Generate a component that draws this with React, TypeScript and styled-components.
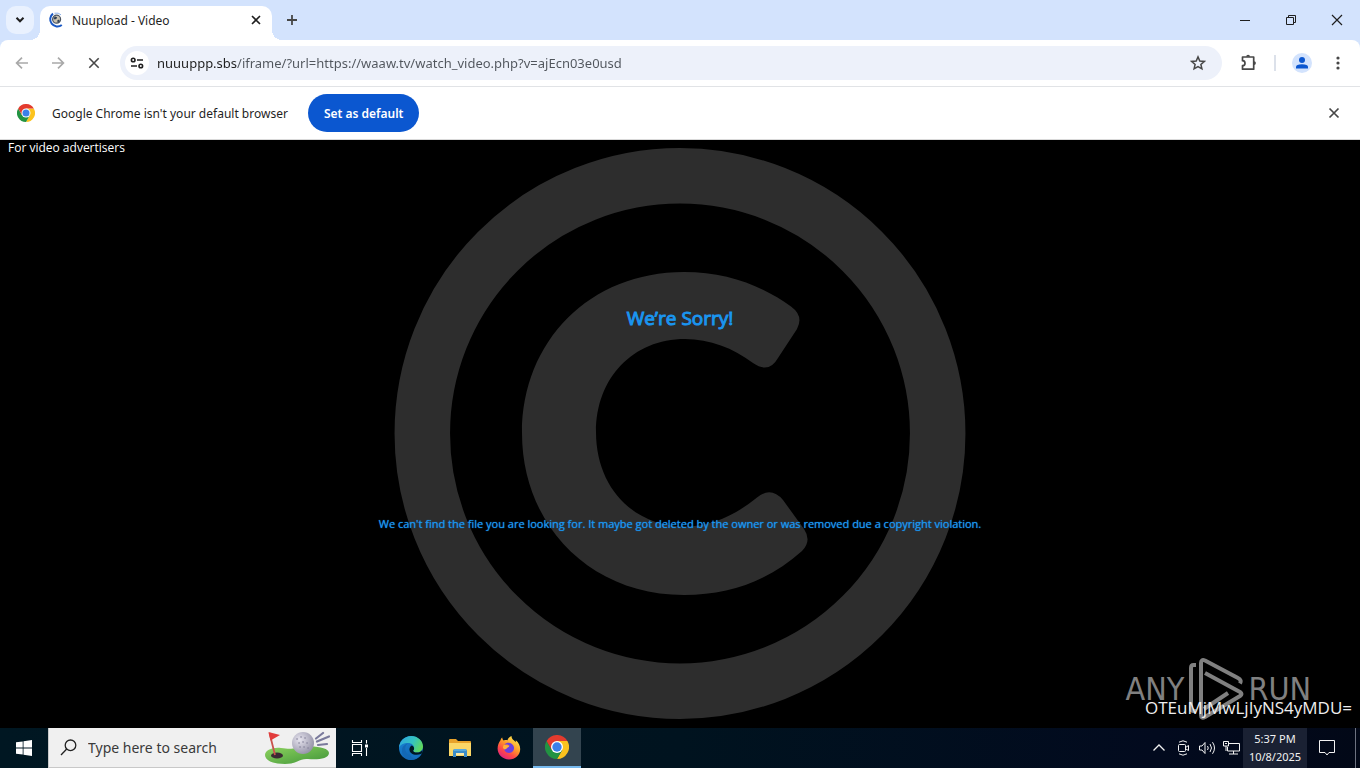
import React from "react";
import styled, { createGlobalStyle, css } from "styled-components";

const uiFont = '"Noto Sans", "Open Sans", sans-serif';

const GlobalStyle = createGlobalStyle`
  * { box-sizing: border-box; }
  body { margin: 0; background: #000; font-family: ${uiFont}; }
  button, input { font-family: inherit; }
  svg { display: block; }
`;

const Desktop = styled.div`
  display: flex;
  flex-direction: column;
  min-height: 100vh;
`;

const iconButton = css`
  display: flex;
  align-items: center;
  justify-content: center;
  flex: none;
  padding: 0;
  border: 0;
  background: transparent;
  color: inherit;
`;

/* ---------- tab strip ---------- */

const TabStrip = styled.header`
  display: flex;
  align-items: flex-end;
  height: 40px;
  padding-left: 6px;
  background: #d3e3fd;
  color: #1f1f1f;
`;

const TabSearch = styled.button`
  ${iconButton}
  width: 28px;
  height: 28px;
  margin-bottom: 6px;
  border-radius: 10px;
  background: #e9f1fe;
`;

const Tab = styled.div`
  position: relative;
  display: flex;
  align-items: center;
  gap: 8px;
  width: 232px;
  height: 34px;
  margin-left: 6px;
  padding: 0 8px 6px 8px;
  border-radius: 10px 10px 0 0;
  background: #fff;
  font-size: 12px;
  &::before, &::after {
    content: "";
    position: absolute;
    bottom: 0;
    width: 10px;
    height: 10px;
  }
  &::before { right: 100%; background: radial-gradient(circle at 0 0, transparent 10px, #fff 10px); }
  &::after { left: 100%; background: radial-gradient(circle at 100% 0, transparent 10px, #fff 10px); }
`;

const TabTitle = styled.span`
  flex: 1;
  white-space: nowrap;
`;

const TabClose = styled.button`
  ${iconButton}
  width: 16px;
  height: 16px;
`;

const NewTab = styled.button`
  ${iconButton}
  width: 28px;
  height: 28px;
  margin: 0 auto 6px 6px;
  color: #474747;
`;

const WindowButton = styled.button`
  ${iconButton}
  width: 46px;
  height: 40px;
`;

/* ---------- toolbar ---------- */

const ToolbarBack = styled.div`
  background: #d3e3fd;
`;

const Toolbar = styled.nav`
  display: flex;
  align-items: center;
  height: 47px;
  padding: 0 4px;
  border-bottom: 1px solid #e1e3e6;
  border-radius: 8px 8px 0 0;
  background: #fff;
  color: #474747;
`;

const ToolButton = styled.button<{ $dim?: boolean }>`
  ${iconButton}
  width: 36px;
  height: 36px;
  color: ${(p) => (p.$dim ? "#a9a9a9" : "#474747")};
`;

const AddressBar = styled.div`
  display: flex;
  flex: 1;
  align-items: center;
  height: 34px;
  margin: 0 9px 0 8px;
  padding: 0 6px 0 5px;
  border-radius: 17px;
  background: #edf1fa;
`;

const SiteInfo = styled.button`
  ${iconButton}
  width: 24px;
  height: 24px;
  border-radius: 12px;
  background: #fff;
  color: #1f1f1f;
`;

const AddressInput = styled.input`
  flex: 1;
  min-width: 0;
  height: 24px;
  margin-left: 8px;
  padding: 0;
  border: 0;
  outline: 0;
  background: linear-gradient(90deg, #1f1f1f 80px, #50555c 80px);
  background-clip: text;
  color: transparent;
  font-size: 13px;
`;

const Divider = styled.span`
  width: 2px;
  height: 16px;
  margin: 0 8px 0 7px;
  background: #dce1ea;
`;

const Avatar = styled.button`
  ${iconButton}
  width: 20px;
  height: 20px;
  margin: 0 8px;
  border-radius: 10px;
  background: #d3e3fd;
`;

/* ---------- info bar ---------- */

const InfoBar = styled.section`
  display: flex;
  align-items: center;
  height: 53px;
  padding: 0 16px 0 17px;
  border-bottom: 1px solid #d9d9d9;
  background: #fff;
  color: #1f1f1f;
  font-size: 12px;
`;

const InfoText = styled.span`
  margin: 0 20px 0 17px;
  white-space: nowrap;
`;

const PrimaryButton = styled.button`
  height: 38px;
  margin-right: auto;
  padding: 0 16px;
  border: 0;
  border-radius: 19px;
  background: #0b57d0;
  color: #fff;
  font-size: 12px;
  font-weight: 600;
`;

const InfoClose = styled.button`
  ${iconButton}
  width: 20px;
  height: 20px;
  color: #474747;
`;

/* ---------- page ---------- */

const Page = styled.main`
  position: relative;
  display: flex;
  flex: 1;
  flex-direction: column;
  align-items: center;
  min-height: 588px;
  background: #000;
  font-family: "Open Sans", sans-serif;
`;

const Backdrop = styled.svg`
  position: absolute;
  inset: 8px 0 9px;
  width: 100%;
  height: calc(100% - 17px);
`;

const AdLink = styled.a`
  position: relative;
  align-self: flex-start;
  margin-left: 8px;
  color: #fff;
  font-size: 12px;
  line-height: 16px;
  text-decoration: none;
`;

const Sorry = styled.h1`
  position: relative;
  margin: 148px 0 0;
  color: #1a95f0;
  font-size: 19px;
  font-weight: 400;
  line-height: 28px;
  -webkit-text-stroke: 1px #1a95f0;
`;

const Reason = styled.p`
  position: relative;
  margin: 184px 16px 0;
  color: #1a95f0;
  font-size: 11px;
  font-weight: 400;
  line-height: 16px;
  text-align: center;
  text-shadow: 0 0 1px #1a95f0;
`;

const Watermark = styled.div`
  position: absolute;
  right: 49px;
  bottom: 8px;
  display: flex;
  align-items: center;
  gap: 4px;
  color: #808080;
  font-family: "Liberation Sans Narrow", "DejaVu Sans Condensed", sans-serif;
  font-size: 32px;
  line-height: 62px;
`;

const Stamp = styled.span`
  position: absolute;
  right: 8px;
  bottom: 8px;
  color: #eee;
  font-size: 17px;
  line-height: 24px;
`;

/* ---------- taskbar ---------- */

const Taskbar = styled.footer`
  display: flex;
  height: 40px;
  background: linear-gradient(90deg, #001722, #00131f 50%, #020a1e 85%, #020817);
  color: #fff;
`;

const TaskButton = styled.button<{ $active?: boolean }>`
  ${iconButton}
  width: ${(p) => (p.$active ? 48 : 49)}px;
  height: 40px;
  background: ${(p) => (p.$active ? "#33444f" : "transparent")};
  border-bottom: ${(p) => (p.$active ? "2px solid #76b9ed" : "0")};
`;

const StartButton = styled(TaskButton)`
  width: 48px;
`;

const TaskView = styled(TaskButton)`
  width: 48px;
  margin-right: 2px;
`;

const SearchBox = styled.label`
  display: flex;
  align-items: center;
  width: 288px;
  height: 40px;
  padding: 0 6px 0 11px;
  border: 1px solid #c8c8c8;
  border-width: 0 0 1px 1px;
  background: #f0f0f0;
  color: #222;
`;

const SearchInput = styled.input`
  flex: 1;
  min-width: 0;
  height: 30px;
  margin-left: 11px;
  padding: 0;
  border: 0;
  outline: 0;
  background: transparent;
  font-size: 14px;
  &::placeholder { color: #3a3a3a; opacity: 1; }
`;

const Tray = styled.div`
  display: flex;
  margin-left: auto;
  color: #f2f2f2;
`;

const TrayButton = styled.button`
  ${iconButton}
  width: 24px;
  height: 40px;
`;

const Clock = styled.button`
  ${iconButton}
  flex-direction: column;
  width: 64px;
  height: 40px;
  background: #1a2133;
  font-size: 11px;
  line-height: 18px;
`;

const ActionCenter = styled(TrayButton)`
  width: 40px;
`;

const ShowDesktop = styled.button`
  width: 5px;
  height: 40px;
  padding: 0;
  border: 0;
  margin-left: 8px;
  border-left: 1px solid #6d7280;
  background: transparent;
`;

/* ---------- icons ---------- */

const Cross = ({ size, arm, weight = 2 }: { size: number; arm: number; weight?: number }) => {
  const a = size / 2 - arm;
  const b = size / 2 + arm;
  return (
    <svg width={size} height={size} fill="none" stroke="currentColor" strokeWidth={weight}>
      <path d={`M${a} ${a}L${b} ${b}M${b} ${a}L${a} ${b}`} />
    </svg>
  );
};

const ChromeLogo = ({ size }: { size: number }) => (
  <svg width={size} height={size} viewBox="0 0 48 48">
    <path fill="#fcc31e" d="M24 24V12h20.8A24 24 0 0 1 24 48l10.4-18z" />
    <path fill="#229342" d="M24 24 34.4 30 24 48A24 24 0 0 1 3.2 12l10.4 18z" />
    <path fill="#e33b2e" d="M3.2 12 13.6 30 24 12h20.8A24 24 0 0 0 3.2 12z" />
    <circle cx="24" cy="24" r="12" fill="#fff" />
    <circle cx="24" cy="24" r="9.4" fill="#3b80ea" />
  </svg>
);

const SiteFavicon = () => (
  <svg width="16" height="16" fill="none">
    <path d="M5 1.600A7 7 0 1 0 13.800 13" stroke="#1857c4" strokeWidth="2" />
    <path d="M6.500 1.200q4-.8 6.500 1.600" stroke="#8fb3ea" strokeWidth="1" />
    <circle cx="8.600" cy="7.200" r="4" fill="#c9c2b0" stroke="#4a5462" strokeWidth="1.200" />
    <path d="M5.400 6l2-1.600 1.800 1-1 1.600-1.600.4zM9 8.800l2-1.200.6 1.400-1.600 1.600z" fill="#2e4057" />
  </svg>
);

const Arrow = ({ back }: { back?: boolean }) => (
  <svg width="16" height="16" fill="none" stroke="currentColor" strokeWidth="1.7">
    <path d={back ? "M14 8H3M8 2.6 2.6 8 8 13.4" : "M2 8h11M8 2.6 13.4 8 8 13.4"} />
  </svg>
);

const EdgeLogo = () => (
  <svg width="24" height="24" viewBox="0 0 24 24">
    <defs>
      <linearGradient id="edgeTop" x1="0" y1="0.2" x2="1" y2="0.6">
        <stop offset="0" stopColor="#2da8e0" />
        <stop offset="0.55" stopColor="#35c3c0" />
        <stop offset="1" stopColor="#62d957" />
      </linearGradient>
      <linearGradient id="edgeBase" x1="0" y1="0" x2="0.8" y2="1">
        <stop offset="0" stopColor="#1b8bdb" />
        <stop offset="1" stopColor="#0f5aa8" />
      </linearGradient>
    </defs>
    <circle cx="12" cy="12" r="12" fill="url(#edgeBase)" />
    <path d="M0 11.6C.6 5 5.8 0 12.2 0 19 0 24 5 24 10.6c0 3.6-2.8 6-6 6-2.600 0-3.800-1-3.800-1.800 0-.7.9-1 .9-2.800 0-2.800-2.700-5-6-5C4.600 7 1 9 0 11.600z" fill="url(#edgeTop)" />
    <path d="M9 7.600C5.800 9.200 5.400 14 8 17.600c2.300 3.200 6.400 5 11.400 3.700-2 1.700-4.600 2.700-7.400 2.700C6 23.600 2.600 19 3 14c.3-3.300 2.800-5.900 6-6.400z" fill="#1368b5" />
    <path d="M14.200 14.700c0 1 1.400 1.900 3.800 1.900 2.200 0 4.100-.8 5.200-2.300.5 1.700-.8 4.200-2.400 5.500-4.500 1.500-9.200-.2-10.300-4.200-.6-2.300.3-5 2.200-6 1.500.6 2.400 1.700 2.400 3.100 0 1-.9 1.400-.9 2z" fill="#001722" />
    <path d="M10.200 13c.4 5 5.800 7.200 12.400 4.800-1.600 3.200-4.200 5-6.400 4.800-4-.4-6.600-4.800-6-9.600z" fill="#1470bf" />
  </svg>
);

const FolderLogo = () => (
  <svg width="22" height="18" viewBox="0 0 22 18">
    <path d="M0 1q0-1 1-1h6l2 2h12q1 0 1 1v3H0z" fill="#e8a22a" />
    <path d="M0 4h22v13H0z" fill="#fbd767" />
    <path d="M4 18v-6q0-2 2-2h10q2 0 2 2v6h-3v-4H7v4z" fill="#3c8dc9" />
    <path d="M7 14h8v2H7z" fill="#fbe9a8" />
    <path d="M5 10h12v2H5z" fill="#58a9dd" />
  </svg>
);

const FirefoxLogo = () => (
  <svg width="24" height="24" viewBox="0 0 24 24">
    <defs>
      <linearGradient id="fox" x1="0.8" y1="0.1" x2="0.25" y2="0.95">
        <stop offset="0" stopColor="#ffe14a" />
        <stop offset="0.4" stopColor="#ff9a2a" />
        <stop offset="0.7" stopColor="#ff4a45" />
        <stop offset="1" stopColor="#e2247c" />
      </linearGradient>
    </defs>
    <path d="M3.500 4.200C4 3 4.400 2.300 5.200 1.600c.2 1.400.6 2.200 1.500 3 1.400-.6 2.600-.6 3.800-.3C11 2.300 12.600.8 14.600 0c-.2 2 .6 3 2.200 4.300.8.6 1.400 1.200 1.900 2l.1-2c2.800 2.300 4.400 5.400 4.400 8.700C23.200 19 18.300 23.500 12 23.500S.6 18.700.6 12.600c0-3.200 1.200-6.300 2.900-8.400z" fill="url(#fox)" />
    <path d="M7.400 8.500c1.600-1.700 5-2.300 7.200-.8 2.600 1.700 3.200 5 1.500 7.300-2 2.700-6.300 2.600-8.200 0-.8-1.100-1-2.300-.7-3.500 1 .6 2.300.4 3.200-.3.800-.7 1-.9 2-.9.300-1.500-2.300-2.200-5-1.800z" fill="#6a3fe0" />
    <path d="M6.500 9.300c1.300-.4 3.200-.2 5 .6.700.3.600.9 0 1.200-1.300.4-1.500 1.700-3 2.200-1.300.4-2.200-.6-2.600-1.700z" fill="#ffb13a" />
  </svg>
);

const GolfArt = () => (
  <svg width="66" height="34" viewBox="0 0 66 34">
    <defs>
      <linearGradient id="green" x1="0" y1="0" x2="1" y2="1">
        <stop offset="0" stopColor="#8ed35f" />
        <stop offset="1" stopColor="#3f9438" />
      </linearGradient>
      <radialGradient id="ball" cx="0.35" cy="0.35" r="0.75">
        <stop offset="0" stopColor="#e6e4ee" />
        <stop offset="1" stopColor="#8f8da3" />
      </radialGradient>
    </defs>
    <path d="M1 24c0-5 8-8 16-7 7 1 10 1 16 0 14-3 32-1 32 5 0 6-12 7-21 6-8-1-11 5-23 5C8 33 1 29 1 24z" fill="url(#green)" />
    <ellipse cx="13" cy="24.500" rx="6" ry="3" fill="#3a2b33" />
    <path d="M5.500 2 11 24" stroke="#c9544c" strokeWidth="1.800" />
    <path d="M4.500 1 16 4 6.500 9.500z" fill="#e23c3c" />
    <circle cx="39" cy="12" r="11" fill="url(#ball)" />
    <path d="M33 8h.1M37 6h.1M41 7h.1M35 12h.1M39 11h.1M43 12h.1M36 16h.1M40 16h.1M44 17h.1" stroke="#85839a" strokeWidth="1.600" strokeLinecap="round" />
    <path d="M52 7.500 59 2M53 10.500 65 5.500M54 14l9-1" stroke="#7a7a9c" strokeWidth="2.200" strokeLinecap="round" />
  </svg>
);

export default function App() {
  return (
    <Desktop>
      <GlobalStyle />
      <TabStrip>
        <TabSearch aria-label="Search tabs">
          <svg width="10" height="8" fill="none" stroke="currentColor" strokeWidth="2"><path d="M1.500 1.800 5 5.300l3.500-3.500" /></svg>
        </TabSearch>
        <Tab>
          <SiteFavicon />
          <TabTitle>Nuupload - Video</TabTitle>
          <TabClose aria-label="Close tab"><Cross size={16} arm={4} weight={1.6} /></TabClose>
        </Tab>
        <NewTab aria-label="New tab">
          <svg width="12" height="12" fill="none" stroke="currentColor" strokeWidth="1.800"><path d="M6 1v10M1 6h10" /></svg>
        </NewTab>
        <WindowButton aria-label="Minimize">
          <svg width="10" height="10" stroke="currentColor"><path d="M0 5.500h10" /></svg>
        </WindowButton>
        <WindowButton aria-label="Restore">
          <svg width="10" height="10" fill="none" stroke="currentColor"><path d="M.5 2.500h7v7h-7zM2.500 2.500v-2h7v7h-2" /></svg>
        </WindowButton>
        <WindowButton aria-label="Close"><Cross size={12} arm={5} weight={1.2} /></WindowButton>
      </TabStrip>

      <ToolbarBack>
        <Toolbar>
          <ToolButton $dim aria-label="Back"><Arrow back /></ToolButton>
          <ToolButton $dim aria-label="Forward"><Arrow /></ToolButton>
          <ToolButton aria-label="Stop"><Cross size={16} arm={4.7} weight={1.6} /></ToolButton>
          <AddressBar>
            <SiteInfo aria-label="Site information">
              <svg width="14" height="12" fill="none" stroke="currentColor" strokeWidth="1.600">
                <circle cx="3.200" cy="3" r="1.800" /><path d="M7 3h6M1 9h6" /><circle cx="10.800" cy="9" r="1.800" />
              </svg>
            </SiteInfo>
            <AddressInput aria-label="Address" spellCheck={false} defaultValue="nuuuppp.sbs/iframe/?url=https://waaw.tv/watch_video.php?v=ajEcn03e0usd" />
            <ToolButton aria-label="Bookmark this tab">
              <svg width="16" height="16" fill="none" stroke="currentColor" strokeWidth="1.500"><path d="M8 1.900 9.800 6l4.500.4-3.400 3 1 4.400L8 11.500l-3.900 2.300 1-4.400-3.400-3L6.200 6z" /></svg>
            </ToolButton>
          </AddressBar>
          <ToolButton aria-label="Extensions">
            <svg width="18" height="18" fill="none" stroke="currentColor" strokeWidth="1.700">
              <path d="M2.500 3h11.200v12.200H2.500v-3.500a2.500 2.500 0 0 0 0-5z" strokeLinejoin="round" />
              <path d="M6.200 2.700a1.900 1.900 0 0 1 3.800 0zM14 7.200a1.900 1.900 0 0 1 0 3.800z" fill="currentColor" stroke="none" />
            </svg>
          </ToolButton>
          <Divider />
          <Avatar aria-label="Profile">
            <svg width="14" height="14" fill="#0b57d0"><circle cx="7" cy="4" r="3" /><path d="M1 12.500v-1.700Q1 8.300 7 8.300t6 2.500v1.700z" /></svg>
          </Avatar>
          <ToolButton aria-label="Menu">
            <svg width="4" height="14" fill="currentColor"><circle cx="2" cy="2" r="1.600" /><circle cx="2" cy="7" r="1.600" /><circle cx="2" cy="12" r="1.600" /></svg>
          </ToolButton>
        </Toolbar>
      </ToolbarBack>

      <InfoBar>
        <ChromeLogo size={18} />
        <InfoText>Google Chrome isn't your default browser</InfoText>
        <PrimaryButton>Set as default</PrimaryButton>
        <InfoClose aria-label="Dismiss"><Cross size={16} arm={4.5} weight={1.7} /></InfoClose>
      </InfoBar>

      <Page>
        <Backdrop viewBox="394.500 148 571 571" fill="#2d2d2d" aria-hidden>
          <circle cx="680" cy="433.500" r="257.700" fill="none" stroke="#2d2d2d" strokeWidth="55.500" />
          <path d="M684 272C727 272 763 286 791 306.500Q804 316 797 329L778 358Q769 374 753 363C733 348 710 339 685 339C633 339 596 378 596 432C596 487 633 526.500 685 526.500C712 526.500 737 514 757 497.500Q771 486 783 500L804 529Q812 541 802 551C768 581 730 595 684 595C590 595 522 525 522 433C522 341 590 272 684 272z" />
        </Backdrop>
        <AdLink href="#advertisers">For video advertisers</AdLink>
        <Sorry>We’re Sorry!</Sorry>
        <Reason>We can't find the file you are looking for. It maybe got deleted by the owner or was removed due a copyright violation.</Reason>
        <Watermark>
          <span>ANY</span>
          <svg width="56" height="62" fill="none" stroke="#808080" strokeWidth="4" strokeLinejoin="round">
            <path d="M8 7H5.500Q3 7 3 10V50q0 3 3 3h2" />
            <path d="M52 25.500Q54 22 50 20L17 2.500Q13 1 13 5V57q0 4 4 2L52 38q3-2 0-4L17 15" />
            <path d="M16 51 40 35" />
          </svg>
          <span>RUN</span>
        </Watermark>
        <Stamp>OTEuMjMwLjIyNS4yMDU=</Stamp>
      </Page>

      <Taskbar>
        <StartButton aria-label="Start">
          <svg width="16" height="16" fill="#fff"><path d="M0 2.300 6.700 1.400v6.200H0zM7.500 1.300 16 0v7.600H7.500zM0 8.400h6.700v6.200L0 13.700zM7.500 8.400H16V16l-8.500-1.300z" /></svg>
        </StartButton>
        <SearchBox>
          <svg width="17" height="17" fill="none" stroke="currentColor" strokeWidth="1.300"><circle cx="10.500" cy="6.300" r="5.300" /><path d="M6.700 10 1 16" /></svg>
          <SearchInput aria-label="Search" placeholder="Type here to search" />
          <GolfArt />
        </SearchBox>
        <TaskView aria-label="Task view">
          <svg width="18" height="16" fill="none" stroke="#fff" strokeWidth="1.100">
            <path d="M1.500 0v2.500h9V0M1.500 16v-2.500h9V16M1.500 4.500h9v7h-9zM15.500 0v3.500M15.500 8v8" /><path d="M14 4.500h3v3h-3z" fill="#fff" stroke="none" />
          </svg>
        </TaskView>
        <TaskButton aria-label="Microsoft Edge"><EdgeLogo /></TaskButton>
        <TaskButton aria-label="File Explorer"><FolderLogo /></TaskButton>
        <TaskButton aria-label="Firefox"><FirefoxLogo /></TaskButton>
        <TaskButton $active aria-label="Google Chrome"><ChromeLogo size={24} /></TaskButton>
        <Tray>
          <TrayButton aria-label="Show hidden icons">
            <svg width="12" height="8" fill="none" stroke="currentColor" strokeWidth="1.300"><path d="M.5 6.500 6 1l5.500 5.500" /></svg>
          </TrayButton>
          <TrayButton aria-label="Meet now">
            <svg width="14" height="16" fill="none" stroke="currentColor"><rect x="2.500" y="4.500" width="7" height="7" rx="1" /><path d="M9.500 7.500 12.500 5.500v5L9.500 8.800M3 2.200Q7 -.6 11 2.200M3 13.800Q7 16.600 11 13.800" /></svg>
          </TrayButton>
          <TrayButton aria-label="Volume">
            <svg width="17" height="14" fill="none" stroke="currentColor"><path d="M.5 5h2.500l3-3.500v11L3 9H.5zM8.500 5q1.500 2 0 4M11 3q3 4 0 8M13.500 1.200q4 5.800 0 11.600" /></svg>
          </TrayButton>
          <TrayButton aria-label="Network">
            <svg width="17" height="14" fill="none" stroke="currentColor"><path d="M6 2.500h10.500v7.500H4.500V6M.5.5h5v4.500h-5zM3 5v5M10.500 10v3M6 13h9" /><path d="M2 2.500h2" /></svg>
          </TrayButton>
          <Clock><span>5:37 PM</span><span>10/8/2025</span></Clock>
          <ActionCenter aria-label="Notifications">
            <svg width="16" height="16" fill="none" stroke="currentColor"><path d="M.5.5h15v12H10L8 15l-2-2.500H.5z" /></svg>
          </ActionCenter>
          <ShowDesktop aria-label="Show desktop" />
        </Tray>
      </Taskbar>
    </Desktop>
  );
}
